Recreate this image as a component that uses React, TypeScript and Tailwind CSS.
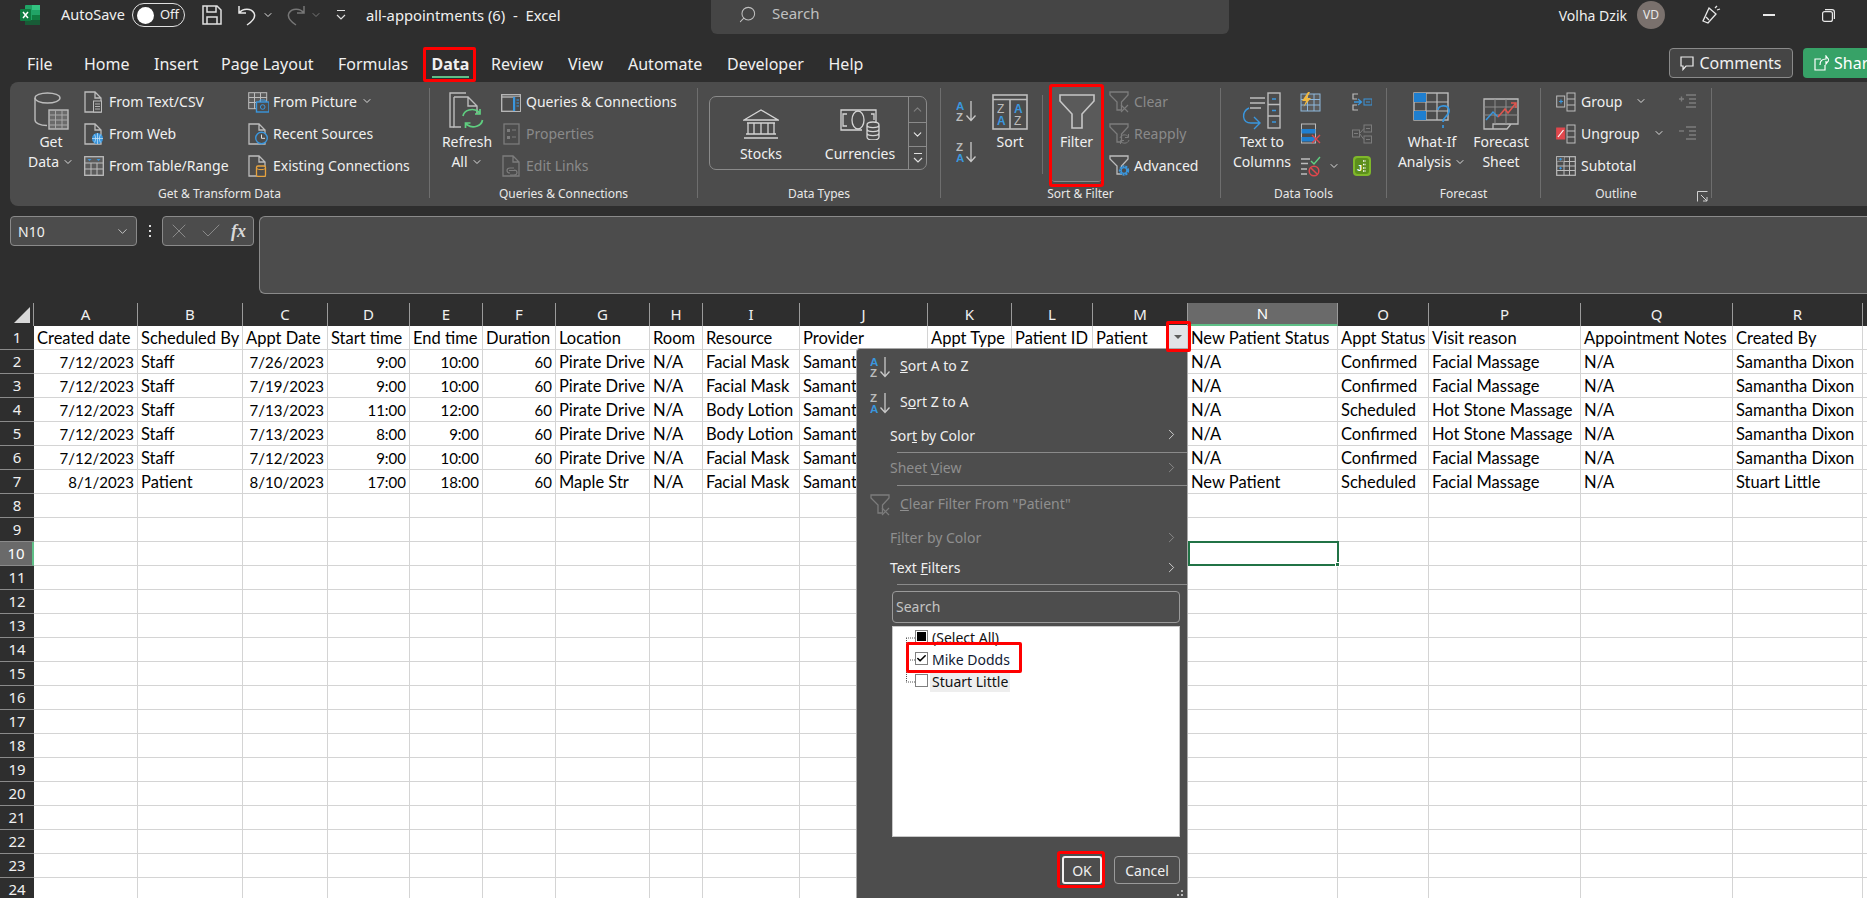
import React from "react";
import { ChevronDown, ChevronRight, ChevronUp, Search, X, Check } from "lucide-react";

const G = "#bcbcbc";
const D = "#7c7c7c";
const B = "#3a96dd";
const UI = "font-['Noto_Sans',sans-serif]";

function Page({ c = G, x = 0 }: { c?: string; x?: number }) {
  return <path d={`M${x + 1} 1H${x + 11}L${x + 17} 7V21H${x + 1}Z M${x + 11} 1V7H${x + 17}`} fill="none" stroke={c} strokeWidth="1.3" />;
}
const Ic = ({ w = 22, h = 22, children }: { w?: number; h?: number; children: React.ReactNode }) => (
  <svg width={w} height={h} viewBox={`0 0 ${w} ${h}`} fill="none">{children}</svg>
);

const ExcelLogo = () => (
  <svg width="20" height="20" viewBox="0 0 20 20">
    <rect x="5" y="0" width="15" height="20" rx="1" fill="#21a366" />
    <rect x="12" y="0" width="8" height="5" fill="#33c481" />
    <rect x="12" y="10" width="8" height="5" fill="#107c41" />
    <rect x="5" y="15" width="15" height="5" fill="#185c37" />
    <rect x="0" y="4" width="11" height="12" rx="1" fill="#107c41" />
    <path d="M3 7l5 6M8 7l-5 6" stroke="#fff" strokeWidth="1.5" />
  </svg>
);
const GetDataIc = () => (
  <svg width="35" height="38" viewBox="0 0 35 38" fill="none" stroke={G} strokeWidth="1.4">
    <ellipse cx="13.5" cy="6" rx="12.5" ry="5" />
    <path d="M1 6V28C1 31 6 33.5 13 33.5" />
    <rect x="15" y="18" width="19" height="19" fill="#6a6a6a" />
    <path d="M15 23H34M15 28H34M15 33H34M21.5 18V37M28 18V37" stroke="#a8a8a8" strokeWidth="1" />
  </svg>
);
const TextCsv = () => (
  <Ic w={20}><Page /><rect x="9.5" y="10" width="8" height="11" fill="#4c4c4c" stroke={G} /><path d="M11 13H16M11 15.5H16M11 18H16" stroke={G} strokeWidth=".9" /></Ic>
);
const WebIc = () => (
  <Ic w={20}><Page /><circle cx="13.5" cy="15.5" r="5.5" fill={B} /><path d="M8 15.5H19M13.5 10V21M10.5 11.5C12 14 12 17 10.5 19.5M16.5 11.5C15 14 15 17 16.5 19.5" stroke="#cfe6f8" strokeWidth=".7" /></Ic>
);
const TableIc = () => (
  <Ic w={20} h={20}><rect x=".7" y=".7" width="18.6" height="18.6" fill="#5c5c5c" stroke={G} strokeWidth="1.3" /><path d="M1 7H19M1 13H19M7 7V19M13 7V19" stroke={G} /><path d="M3.5 3H7.5L5.5 5ZM12.5 3H16.5L14.5 5Z" fill={B} /></Ic>
);
const PictureIc = () => (
  <Ic w={21} h={22}><rect x=".7" y="1.7" width="18" height="16" fill="#5c5c5c" stroke={G} /><path d="M1 6.5H19M1 11.5H19M6.5 2V18M12.5 2V18" stroke={G} /><rect x="8.5" y="11" width="12.5" height="10" fill="#4c4c4c" stroke={B} strokeWidth="1.4" /><path d="M11 11L12 9H17L18 11" stroke={B} /><circle cx="14.7" cy="16" r="2.3" stroke={B} /></Ic>
);
const RecentIc = () => (
  <Ic w={21}><Page /><circle cx="13.5" cy="15" r="5.8" fill="#4c4c4c" stroke={B} strokeWidth="1.4" /><path d="M13.5 11.5V15.3H17" stroke="#e0e0e0" /></Ic>
);
const ExistingIc = () => (
  <Ic w={21}><Page /><rect x="8.5" y="11" width="9" height="10.5" rx="1.5" fill="#4c4c4c" stroke="#e8a33d" strokeWidth="1.3" /><path d="M8.5 13.5C10 15 16 15 17.5 13.5" stroke="#e8a33d" /></Ic>
);
const RefreshIc = () => (
  <svg width="36" height="38" viewBox="0 0 36 38" fill="none" stroke={G} strokeWidth="1.4">
    <path d="M5 35H1V1H17" />
    <path d="M5 5H19L28 14V22M5 5V35H12M19 5V14H28" />
    <path d="M14 24C15 18 24 15.5 29 19.5L31 21.5M31 17V22H26M33.5 28C32.5 34 24 37 18.5 33L16.5 31M16.5 36V31H21.5" stroke="#5fcf80" strokeWidth="1.7" />
  </svg>
);
const QueriesIc = () => (
  <Ic w={20} h={20}><rect x=".7" y="2.7" width="18.6" height="16.6" stroke={G} strokeWidth="1.3" /><path d="M1 5H19" stroke={G} strokeWidth="1.3" /><rect x="12" y="5" width="7" height="14" fill="#4c4c4c" /><rect x="12" y="5" width="2.2" height="14" fill={B} /><path d="M15.5 8H18M15.5 11H18M15.5 14H18" stroke={B} /></Ic>
);
const PropsIc = () => (
  <Ic w={20}><rect x="3" y="1" width="15" height="20" stroke={D} strokeWidth="1.3" /><path d="M6 6H9V9H6ZM6 13H9V16H6Z" fill={D} /><path d="M11 7H15M11 14H15" stroke={D} /></Ic>
);
const LinksIc = () => (
  <Ic w={22}><Page c={D} x={1} /><path d="M9 18C5 18 5 13 9 13H13M13 15C17 15 17 20 13 20H9M8 15.5H14" stroke={D} strokeWidth="1.2" /></Ic>
);
const StocksIc = () => (
  <svg width="36" height="32" viewBox="0 0 36 32" fill="none" stroke="#d4d4d4" strokeWidth="1.3">
    <path d="M1 12L18 2L35 12Z" />
    <path d="M4 15H32M5 15V26M11 15V26M18 15V26M25 15V26M31 15V26M3 26H33M1 30H35" />
  </svg>
);
const CurrIc = () => (
  <svg width="40" height="32" viewBox="0 0 40 32" fill="none" stroke="#d4d4d4" strokeWidth="1.3">
    <path d="M22 22H1V2H36V14" />
    <path d="M7 6H3V18H7M31 6H34V12" />
    <ellipse cx="18" cy="12" rx="6" ry="9" />
    <path d="M27 17C27 13 39 13 39 17V29C39 33 27 33 27 29Z M27 17C27 20.5 39 20.5 39 17M27 21C27 24.5 39 24.5 39 21M27 25C27 28.5 39 28.5 39 25" fill="#4c4c4c" />
  </svg>
);
const Letters = ({ a, b, ca, cb }: { a: string; b: string; ca: string; cb: string }) => (
  <svg width="21" height="22" viewBox="0 0 21 22">
    <text x="0" y="9.5" fontFamily="Liberation Sans" fontWeight="700" fontSize="11.5" fill={ca}>{a}</text>
    <text x="0" y="21" fontFamily="Liberation Sans" fontWeight="700" fontSize="11.5" fill={cb}>{b}</text>
    <path d="M15 1V20M10.5 15.5L15 20.5L19.5 15.5" stroke="#c8c8c8" strokeWidth="1.3" fill="none" />
  </svg>
);
const SortIc = () => (
  <svg width="36" height="36" viewBox="0 0 36 36" fill="none">
    <rect x="1" y="1" width="34" height="34" stroke={G} strokeWidth="1.6" />
    <path d="M1 5.5H35M18 5.5V35" stroke={G} strokeWidth="1.6" />
    <text x="5" y="19" fontFamily="Liberation Sans" fontSize="12" fill={G}>Z</text>
    <text x="5" y="31" fontFamily="Liberation Sans" fontSize="12" fontWeight="700" fill={B}>A</text>
    <text x="22" y="19" fontFamily="Liberation Sans" fontSize="12" fontWeight="700" fill={B}>A</text>
    <text x="22" y="31" fontFamily="Liberation Sans" fontSize="12" fill={G}>Z</text>
  </svg>
);
const BigFunnel = () => (
  <svg width="36" height="36" viewBox="0 0 36 36" fill="none"><path d="M1 1H35V7L23 20V34H13V20L1 7Z" stroke="#c6c6c6" strokeWidth="1.6" /></svg>
);
const funnel = (c: string) => <path d="M1 1H19V4L12.5 11V19H8V11L1 4Z" stroke={c} strokeWidth="1.3" fill="#4c4c4c" />;
const ClearIc = () => <Ic w={21}>{funnel(D)}<path d="M12 14L19 21M19 14L12 21" stroke={D} strokeWidth="1.2" /></Ic>;
const ReapplyIc = () => <Ic w={21}>{funnel(D)}<path d="M11 15C12 11 18 11 19.5 14M19.5 11V14.5H16M20 17C19 21 13 21 11.5 18M11.5 21V17.5H15" stroke={D} /></Ic>;
const AdvIc = () => <Ic w={21}>{funnel(G)}<circle cx="15" cy="15.5" r="4" stroke={B} strokeWidth="2.4" strokeDasharray="2 .8" fill="#4c4c4c" /><circle cx="15" cy="15.5" r="2.8" stroke={B} strokeWidth="1.2" /></Ic>;
const T2CIc = () => (
  <svg width="40" height="38" viewBox="0 0 40 38" fill="none">
    <path d="M8 6H23M8 11H23M8 16H19" stroke={G} strokeWidth="1.4" />
    <rect x="26" y="1" width="12" height="35" stroke={G} strokeWidth="1.4" />
    <path d="M26 12.5H38M26 24H38" stroke={G} strokeWidth="1.4" />
    <path d="M30 7H34M30 18.5H34M30 30H34" stroke={B} strokeWidth="1.3" />
    <path d="M7 16C-1 20 0 31 9 31H17M12 25L18 31L12 37" stroke={B} strokeWidth="1.4" />
  </svg>
);
const FlashIc = () => (
  <Ic w={21} h={20}><rect x="1" y="2" width="19" height="17" fill="#5c5c5c" stroke="#8db8dc" /><path d="M1 7.5H20M1 13H20M7.5 2V19M14 2V19" stroke="#8db8dc" /><path d="M8 0L2 9H6L3.5 15L11 6H7L10 0Z" fill="#f0b840" /></Ic>
);
const DupIc = () => (
  <Ic w={21} h={22}><rect x="1.5" y="1" width="14" height="19" stroke={G} /><rect x="1.5" y="6" width="14" height="4.5" fill="#1f7fd0" /><rect x="1.5" y="14" width="14" height="4.5" fill="#1f7fd0" /><path d="M12 12L20 20M20 12L12 20" stroke="#e0474c" strokeWidth="1.4" /></Ic>
);
const ValidIc = () => (
  <Ic w={21} h={22}><path d="M1 4H10M1 8.5H8M1 14H7M1 19H7" stroke={G} strokeWidth="1.3" /><path d="M11 6L14 9L20 2" stroke="#5fcf80" strokeWidth="1.4" /><circle cx="14" cy="16" r="4.8" stroke="#e0474c" strokeWidth="1.5" /><path d="M10.7 12.7L17.3 19.3" stroke="#e0474c" strokeWidth="1.5" /></Ic>
);
const ConsIc = () => (
  <Ic w={20} h={18}><path d="M6 1H1V6H5M6 17H1V12H5" stroke={G} strokeWidth="1.2" /><path d="M2 9H9M6 6L9.5 9L6 12" stroke={B} strokeWidth="1.3" /><rect x="12" y="6" width="8" height="6" stroke={B} /><path d="M14 9H18" stroke={B} /></Ic>
);
const RelIc = () => (
  <Ic w={20} h={20}><rect x="0.5" y="6" width="7" height="7" stroke={D} /><rect x="12" y="1" width="7.5" height="7" stroke={D} /><rect x="12" y="12" width="7.5" height="7" stroke={D} /><path d="M7.5 9.5L12 4.5M7.5 9.5L12 15.5M2 9.5H6M14 4.5H18M14 15.5H18" stroke={D} /></Ic>
);
const ModelIc = () => (
  <Ic w={20} h={22}><rect x="1" y="1" width="18" height="20" rx="4" fill="#7fb82a" /><rect x="3" y="3" width="14" height="16" rx="3" fill="#5c8f1c" /><text x="5" y="16" fontFamily="Liberation Sans" fontSize="9" fontWeight="700" fill="#fff">J</text><path d="M11 6H14M11 9.5H14M11 13H14M11 16H14" stroke="#fff" strokeWidth="1.3" strokeDasharray="1.5 1" /></Ic>
);
const WhatIfIc = () => (
  <svg width="39" height="38" viewBox="0 0 39 38" fill="none">
    <rect x="1" y="1" width="34" height="27" stroke={G} strokeWidth="1.4" />
    <path d="M1 10H35M1 19H35M13 1V28M24 1V28" stroke={G} strokeWidth="1.2" />
    <rect x="1" y="1" width="12" height="9" fill="#1f7fd0" />
    <rect x="1" y="19" width="12" height="9" fill="#1f7fd0" />
    <path d="M25 18C25 13 35 12 36 18C37 24 30 24 30 30M30 33V36" stroke={B} strokeWidth="1.7" />
  </svg>
);
const ForecastIc = () => (
  <svg width="36" height="32" viewBox="0 0 36 32" fill="none">
    <path d="M10 31H1V1H35V26H28L24 31H10V26H28" stroke={G} strokeWidth="1.3" />
    <path d="M1 9H35M1 17H35M12 1V26M23 1V26" stroke="#8c8c8c" />
    <path d="M3 22L10 14L15 19" stroke={B} strokeWidth="1.5" />
    <path d="M15 19L22 11L25 15L33 5M28 5H33V10" stroke="#e0564f" strokeWidth="1.5" />
  </svg>
);
const GroupIc = ({ red }: { red?: boolean }) => (
  <Ic w={20} h={20}><rect x=".7" y="4" width="8" height="11" fill={red ? "#e0474c" : "#4c4c4c"} stroke={red ? "#e0474c" : G} /><path d={red ? "M2 13L7.5 6" : "M3 9.5H7M5 7.5V11.5"} stroke={red ? "#fff" : B} strokeWidth="1.2" /><rect x="11" y="1" width="8" height="18" stroke={G} /><path d="M11 7H19M11 13H19" stroke={G} /></Ic>
);
const SubtotalIc = () => (
  <Ic w={20} h={20}><rect x=".7" y=".7" width="18.6" height="18.6" stroke={G} strokeWidth="1.2" /><path d="M8 1V19M13.5 1V19M1 5.5H19M1 10H19M1 14.5H19" stroke={G} /><rect x="1" y="1" width="7" height="4.5" fill="#5c5c5c" /><path d="M3 3.2H6M4.5 2V4.5M3 12.2H6M4.5 11V13.5" stroke={B} /></Ic>
);
const DetailIc = ({ plus }: { plus?: boolean }) => (
  <Ic w={19} h={16}><path d={plus ? "M1 5H6M3.5 2.5V7.5" : "M1 5H6"} stroke={D} strokeWidth="1.4" /><path d="M8 1H18M11 5H18M11 9H18M8 13H18" stroke={D} strokeWidth="1.4" /></Ic>
);
const Launcher = () => (
  <svg width="11" height="11" viewBox="0 0 11 11" fill="none" stroke="#d0d0d0"><path d="M.5 10.5V.5H10.5" /><path d="M4 4L10 10M6 10H10V6" /></svg>
);

const Chev = ({ c = "#dcdcdc" }: { c?: string }) => <ChevronDown size={12} color={c} strokeWidth={2} className="shrink-0" />;

function Small({ icon, label, dim, className = "" }: { icon?: React.ReactNode; label?: React.ReactNode; dim?: boolean; className?: string }) {
  return (
    <div className={`flex h-8 items-center text-[14px] whitespace-nowrap ${dim ? "text-[#8a8a8a]" : "text-[#f0f0f0]"} ${className}`}>
      <span className="flex w-[25px] shrink-0 items-center">{icon}</span>
      <span className="pb-[2px]">{label}</span>
    </div>
  );
}
function Big({ icon, l1, l2, className = "" }: { icon: React.ReactNode; l1: string; l2?: React.ReactNode; className?: string }) {
  return (
    <div className={`flex shrink-0 flex-col items-center text-[14px] leading-[20px] text-[#f0f0f0] whitespace-nowrap ${className}`}>
      <div className="flex h-[46px] items-end pb-[2px]">{icon}</div>
      <div>{l1}</div>
      {l2 && <div className="flex items-center gap-[3px]">{l2}</div>}
    </div>
  );
}
function Group({ label, width, children, extra }: { label: string; width: string; children: React.ReactNode; extra?: React.ReactNode }) {
  return (
    <div className={`flex shrink-0 ${width}`}>
      <div className="relative flex min-w-0 flex-1 flex-col">
        <div className="flex h-[98px]">{children}</div>
        <div className={`flex h-[20px] items-center justify-center text-[12px] text-[#e8e8e8] ${extra ? "pr-[20px]" : ""}`}>{label}</div>
        {extra && <div className="absolute right-[3px] bottom-[4px]">{extra}</div>}
      </div>
      <div className="mt-[2px] h-[110px] w-px bg-[#6e6e6e]" />
    </div>
  );
}

const COLS = "grid-cols-[34px_104px_105px_85px_82px_73px_73px_94px_53px_97px_128px_84px_81px_95px_150px_91px_152px_152px_130px_4px]";
const letters = "A B C D E F G H I J K L M N O P Q R".split(" ");
const rightAlign = [0, 2, 3, 4, 5];
const rows: string[][] = [
  ["Created date", "Scheduled By", "Appt Date", "Start time", "End time", "Duration", "Location", "Room", "Resource", "Provider", "Appt Type", "Patient ID", "Patient", "New Patient Status", "Appt Status", "Visit reason", "Appointment Notes", "Created By"],
  ["7/12/2023", "Staff", "7/26/2023", "9:00", "10:00", "60", "Pirate Drive", "N/A", "Facial Mask", "Samantha Dixon", "", "", "", "N/A", "Confirmed", "Facial Massage", "N/A", "Samantha Dixon"],
  ["7/12/2023", "Staff", "7/19/2023", "9:00", "10:00", "60", "Pirate Drive", "N/A", "Facial Mask", "Samantha Dixon", "", "", "", "N/A", "Confirmed", "Facial Massage", "N/A", "Samantha Dixon"],
  ["7/12/2023", "Staff", "7/13/2023", "11:00", "12:00", "60", "Pirate Drive", "N/A", "Body Lotion", "Samantha Dixon", "", "", "", "N/A", "Scheduled", "Hot Stone Massage", "N/A", "Samantha Dixon"],
  ["7/12/2023", "Staff", "7/13/2023", "8:00", "9:00", "60", "Pirate Drive", "N/A", "Body Lotion", "Samantha Dixon", "", "", "", "N/A", "Confirmed", "Hot Stone Massage", "N/A", "Samantha Dixon"],
  ["7/12/2023", "Staff", "7/12/2023", "9:00", "10:00", "60", "Pirate Drive", "N/A", "Facial Mask", "Samantha Dixon", "", "", "", "N/A", "Confirmed", "Facial Massage", "N/A", "Samantha Dixon"],
  ["8/1/2023", "Patient", "8/10/2023", "17:00", "18:00", "60", "Maple Str", "N/A", "Facial Mask", "Samantha Dixon", "", "", "", "New Patient", "Scheduled", "Facial Massage", "N/A", "Stuart Little"],
];

function Sheet() {
  const all = Array.from({ length: 24 }, (_, i) => i);
  return (
    <div className="min-h-0 flex-1 overflow-hidden">
      <div className={`grid h-[23px] ${COLS} ${UI}`}>
        <div className="relative border-r border-[#9a9a9a]">
          <div className="absolute right-[3px] bottom-[3px] h-0 w-0 border-b-[16px] border-l-[16px] border-b-[#d8d8d8] border-l-transparent" />
        </div>
        {letters.map((l) => (
          <div key={l} className={`flex items-center justify-center border-r border-[#9a9a9a] text-[15px] leading-none ${l === "N" ? "border-b-2 border-b-[#5fbf87] bg-[#6a6a6a] text-white" : "text-[#f0f0f0]"}`}>{l}</div>
        ))}
        <div />
      </div>
      {all.map((r) => (
        <div key={r} className={`grid h-6 ${COLS}`}>
          <div className={`flex items-center justify-center border-b border-[#8a8a8a] text-[15px] leading-none ${UI} ${r === 9 ? "border-r-2 border-r-[#5fbf87] bg-[#6a6a6a] text-white" : "text-[#f0f0f0]"}`}>{r + 1}</div>
          {letters.map((l, c) => {
            const t = rows[r]?.[c] ?? "";
            const right = r > 0 && rightAlign.includes(c);
            return (
              <div key={l} className={`flex items-center overflow-hidden border-r border-b border-[#d4d4d4] bg-white px-[3px] pt-[1px] font-['Lato',sans-serif] leading-none whitespace-nowrap text-black ${right ? "justify-end text-[15px]" : "text-[16.5px]"}`}>{t}</div>
            );
          })}
          <div className="border-b border-[#d4d4d4] bg-white" />
        </div>
      ))}
    </div>
  );
}

function MenuRow({ h, icon, dim, label, chev, pl }: { h: string; icon?: React.ReactNode; dim?: boolean; label: React.ReactNode; chev?: boolean; pl: string }) {
  return (
    <div className={`flex shrink-0 items-center ${h} ${pl} ${dim ? "text-[#8f8f8f]" : "text-[#f0f0f0]"}`}>
      {icon && <span className="flex w-[30px] shrink-0 items-center">{icon}</span>}
      <span className="flex-1 pb-[3px]">{label}</span>
      {chev && <ChevronRight size={17} strokeWidth={1.3} className="mr-[7px] mb-[4px] shrink-0" color={dim ? "#8f8f8f" : "#d8d8d8"} />}
    </div>
  );
}
const Sep = () => <div className="ml-[40px] h-px shrink-0 bg-[#8a8a8a]" />;
const Box = ({ children }: { children?: React.ReactNode }) => (
  <span className="mb-[3px] flex h-[13px] w-[13px] shrink-0 items-center justify-center border border-[#808080] bg-white">{children}</span>
);

function FilterPopup() {
  return (
    <div className={`absolute top-[348px] left-[856px] flex h-[550px] w-[332px] flex-col rounded-tl-[4px] border-x border-t border-[#a8a8a8] bg-[#4d4d4d] text-[14px] ${UI}`}>
      <MenuRow h="h-[36px]" pl="pl-[13px]" icon={<Letters a="A" b="Z" ca={B} cb={G} />} label={<><u>S</u>ort A to Z</>} />
      <MenuRow h="h-[36px]" pl="pl-[13px]" icon={<Letters a="Z" b="A" ca={G} cb={B} />} label={<>S<u>o</u>rt Z to A</>} />
      <MenuRow h="h-[31px]" pl="pl-[33px]" chev label={<>Sor<u>t</u> by Color</>} />
      <Sep />
      <MenuRow h="h-[32px]" pl="pl-[33px]" dim chev label={<>Sheet <u>V</u>iew</>} />
      <Sep />
      <MenuRow h="h-[38px]" pl="pl-[13px]" dim icon={<ClearIc />} label={<><u>C</u>lear Filter From "Patient"</>} />
      <MenuRow h="h-[30px]" pl="pl-[33px]" dim chev label={<>F<u>i</u>lter by Color</>} />
      <MenuRow h="h-[30px]" pl="pl-[33px]" chev label={<>Text <u>F</u>ilters</>} />
      <Sep />
      <div className="mt-[6px] ml-[35px] flex h-[32px] w-[288px] shrink-0 items-center rounded-[4px] border border-[#9a9a9a] pb-[2px] pl-[3px] text-[#c4c4c4]">Search</div>
      <div className="relative mt-[3px] ml-[35px] flex h-[211px] w-[288px] shrink-0 flex-col border border-[#c8c8c8] bg-white pl-[22px] text-[14px] leading-[20px] text-[#111]">
        <svg className="absolute top-[6px] left-[13px]" width="10" height="50" fill="none" stroke="#555" strokeDasharray="1 1"><path d="M0 5H10M.5 5V49M0 27H10M0 49H10" /></svg>
        <div className="flex h-[22px] items-center gap-[4px]"><Box><span className="h-[9px] w-[9px] bg-black" /></Box><span className="pb-[1px]">(Select All)</span></div>
        <div className="flex h-[22px] items-center gap-[4px]"><Box><Check size={11} strokeWidth={3.5} color="#000" /></Box><span className="pb-[1px] text-[#111a33]">Mike Dodds</span></div>
        <div className="flex h-[22px] items-center gap-[2px]"><Box /><span className="bg-[#eeeeee] px-[2px]">Stuart Little</span></div>
      </div>
      <div className="mt-[19px] ml-[205px] flex shrink-0 gap-[12px]">
        <div className="flex h-[28px] w-[40px] items-center justify-center rounded-[3px] border-2 border-[#f2f2f2] text-[#f0f0f0]">OK</div>
        <div className="flex h-[28px] w-[66px] items-center justify-center rounded-[4px] border border-[#9a9a9a] text-[#f0f0f0]">Cancel</div>
      </div>
      <svg className="absolute right-[2px] bottom-0" width="10" height="10" fill="#bbb"><rect x="6" y="2" width="2" height="2" /><rect x="2" y="6" width="2" height="2" /><rect x="6" y="6" width="2" height="2" /></svg>
    </div>
  );
}

const tabs = [
  ["File", "w-[57px]"], ["Home", "w-[70px]"], ["Insert", "w-[67px]"], ["Page Layout", "w-[117px]"], ["Formulas", "w-[93.5px]"],
];
const tabs2 = [["Review", "w-[77px]"], ["View", "w-[60px]"], ["Automate", "w-[99px]"], ["Developer", "w-[101.5px]"], ["Help", "w-[50px]"]];

export default function App() {
  return (
    <div className={`relative flex h-[898px] w-[1867px] flex-col overflow-hidden bg-[#2e2e2e] text-[#f0f0f0] ${UI}`}>
      {/* title bar */}
      <div className="flex h-[47px] shrink-0 items-start text-[14px]">
        <div className="flex h-[30px] w-[711px] shrink-0 items-center">
          <div className="ml-[20px]"><ExcelLogo /></div>
          <span className="ml-[21px] text-[14.5px]">AutoSave</span>
          <div className="ml-[7px] flex h-[24px] w-[53px] items-center rounded-full border border-[#e0e0e0] pl-[4px]">
            <span className="h-[17px] w-[17px] rounded-full bg-white" />
            <span className="ml-[6px] text-[13px]">Off</span>
          </div>
          <svg className="ml-[17px]" width="20" height="20" viewBox="0 0 20 20" fill="none" stroke="#e0e0e0" strokeWidth="1.5"><path d="M1 1H15L19 5V19H1Z M5 1V7H14V1M5 19V12H15V19" /></svg>
          <svg className="ml-[16px]" width="19" height="21" viewBox="0 0 19 21" fill="none" stroke="#e8e8e8" strokeWidth="1.5"><path d="M1 1V8H8M1 8C5 3 13 3 16 8C18 12 15 16 9 20" /></svg>
          <ChevronDown size={12} className="ml-[5px]" color="#e0e0e0" />
          <svg className="ml-[12px]" width="19" height="21" viewBox="0 0 19 21" fill="none" stroke="#777" strokeWidth="1.5"><path d="M18 1V8H11M18 8C14 3 6 3 3 8C1 12 4 16 10 20" /></svg>
          <ChevronDown size={12} className="ml-[5px]" color="#777" />
          <svg className="ml-[13px]" width="12" height="12" viewBox="0 0 12 12" fill="none" stroke="#e0e0e0" strokeWidth="1.2"><path d="M2 1.5H10M2 6L6 10L10 6" /></svg>
          <span className="ml-[19px] text-[14.8px] whitespace-pre">all-appointments (6)  -  Excel</span>
        </div>
        <div className="flex h-[34px] w-[518px] shrink-0 items-center rounded-b-[6px] bg-[#454545] pb-[5px] pl-[27px] text-[#c0c0c0]">
          <Search size={19} strokeWidth={1.3} className="-scale-x-100" />
          <span className="ml-[15px] pb-[2px] text-[15px]">Search</span>
        </div>
        <div className="flex h-[30px] flex-1 items-center justify-end">
          <span className="mr-[10px]">Volha Dzik</span>
          <span className="flex h-[28px] w-[28px] items-center justify-center rounded-full bg-[#7a716d] text-[12px] text-[#e8e8e8]">VD</span>
          <svg className="ml-[36px]" width="20" height="20" viewBox="0 0 20 20" fill="none" stroke="#e8e8e8" strokeWidth="1.3"><path d="M8 3L15 9L7 18L2 16Z M5 12L8 15 M14 3L16 1M16 5L19 4" /></svg>
          <span className="ml-[42px] h-[2px] w-[12px] bg-[#e8e8e8]" />
          <svg className="mr-[32px] ml-[47px]" width="13" height="13" viewBox="0 0 13 13" fill="none" stroke="#e8e8e8" strokeWidth="1.2"><rect x=".6" y="2.6" width="9.8" height="9.8" rx="2" /><path d="M3 .6H10C11.5.6 12.4 1.5 12.4 3V10" /></svg>
        </div>
      </div>
      {/* tabs */}
      <div className="flex h-[35px] shrink-0 items-start pt-[5px] pl-[27px] text-[16px]">
        {tabs.map(([t, w]) => <span key={t} className={`${w} shrink-0`}>{t}</span>)}
        <div className="flex w-[59.5px] shrink-0 flex-col items-start">
          <span className="font-bold">Data</span>
          <span className="h-[2px] w-[37px] bg-[#5fbf87]" />
        </div>
        {tabs2.map(([t, w]) => <span key={t} className={`${w} shrink-0`}>{t}</span>)}
        <div className="-mt-[4px] ml-auto flex shrink-0 items-center gap-[10px]">
          <div className="flex h-[30px] w-[124px] items-center justify-center gap-[5px] rounded-[4px] border border-[#8a8a8a] bg-[#454545] text-[16px]">
            <svg width="14" height="15" viewBox="0 0 14 15" fill="none" stroke="#eee" strokeWidth="1.2"><path d="M1 1H13V10H6L3 13.5V10H1Z" /></svg>
            Comments
          </div>
          <div className="flex h-[30px] w-[64px] items-center gap-[5px] overflow-hidden rounded-l-[4px] bg-[#37a267] pl-[11px] text-[16px] text-white">
            <svg className="shrink-0" width="15" height="16" viewBox="0 0 15 16" fill="none" stroke="#fff" strokeWidth="1.2"><path d="M7 4H1V15H11V10M6 10C6 6 8 4 12 4V1L15 5L12 9V6" /></svg>
            Share
          </div>
        </div>
      </div>
      {/* ribbon */}
      <div className="ml-[10px] flex h-[124px] shrink-0 rounded-l-[8px] bg-[#4c4c4c] pt-[4px]">
        <Group label="Get & Transform Data" width="w-[420px]">
          <Big className="ml-[14px] w-[54px]" icon={<GetDataIc />} l1="Get" l2={<>Data <Chev /></>} />
          <div className="ml-[6px] w-[164px]">
            <Small icon={<TextCsv />} label="From Text/CSV" />
            <Small icon={<WebIc />} label="From Web" />
            <Small icon={<TableIc />} label="From Table/Range" />
          </div>
          <div>
            <Small icon={<PictureIc />} label={<span className="flex items-center gap-[4px]">From Picture <Chev /></span>} />
            <Small icon={<RecentIc />} label="Recent Sources" />
            <Small icon={<ExistingIc />} label="Existing Connections" />
          </div>
        </Group>
        <Group label="Queries & Connections" width="w-[268px]">
          <Big className="ml-[10px] w-[54px]" icon={<RefreshIc />} l1="Refresh" l2={<>All <Chev /></>} />
          <div className="ml-[7px]">
            <Small icon={<QueriesIc />} label="Queries & Connections" />
            <Small icon={<PropsIc />} label="Properties" dim />
            <Small icon={<LinksIc />} label="Edit Links" dim />
          </div>
        </Group>
        <Group label="Data Types" width="w-[243px]">
          <div className="mt-[10px] ml-[11px] flex h-[74px] w-[218px] rounded-[7px] border border-[#8a8a8a] text-[14px]">
            <div className="flex w-[102px] flex-col items-center pt-[11px]"><StocksIc /><span className="mt-[3px]">Stocks</span></div>
            <div className="flex w-[96px] flex-col items-center pt-[11px]"><CurrIc /><span className="mt-[3px]">Currencies</span></div>
            <div className="flex flex-1 flex-col border-l border-[#8a8a8a]">
              <div className="flex h-[26px] items-center justify-center border-b border-[#8a8a8a]"><ChevronUp size={13} color="#808080" /></div>
              <div className="flex h-[24px] items-center justify-center border-b border-[#8a8a8a]"><ChevronDown size={13} color="#e8e8e8" /></div>
              <div className="flex flex-1 items-center justify-center"><svg width="12" height="12" viewBox="0 0 12 12" fill="none" stroke="#e0e0e0" strokeWidth="1.2"><path d="M2 1.5H10M2 6L6 10L10 6" /></svg></div>
            </div>
          </div>
        </Group>
        <Group label="Sort & Filter" width="w-[280px]">
          <div className="ml-[15px] flex w-[36px] shrink-0 flex-col gap-[19px] pt-[14px]">
            <Letters a="A" b="Z" ca={B} cb={G} />
            <Letters a="Z" b="A" ca={G} cb={B} />
          </div>
          <Big className="w-[36px]" icon={<SortIc />} l1="Sort" />
          <div className="mt-[9px] ml-[14px] h-[79px] w-px bg-[#6e6e6e]" />
          <div className="ml-[9px] h-[96px] w-[49px] shrink-0 rounded-[3px] border-b border-[#8a8a8a] bg-[#5a5a5a]">
            <Big className="w-full" icon={<BigFunnel />} l1="Filter" />
          </div>
          <div className="ml-[8px]">
            <Small icon={<ClearIc />} label="Clear" dim />
            <Small icon={<ReapplyIc />} label="Reapply" dim />
            <Small icon={<AdvIc />} label="Advanced" />
          </div>
        </Group>
        <Group label="Data Tools" width="w-[166px]">
          <Big className="ml-[11px] w-[60px]" icon={<T2CIc />} l1="Text to" l2="Columns" />
          <div className="ml-[8px] w-[52px]">
            <div className="flex h-8 items-center"><FlashIc /></div>
            <div className="flex h-8 items-center"><DupIc /></div>
            <div className="flex h-8 items-center gap-[7px]"><ValidIc /><Chev /></div>
          </div>
          <div>
            <div className="flex h-8 items-center"><ConsIc /></div>
            <div className="flex h-8 items-center"><RelIc /></div>
            <div className="flex h-8 items-center"><ModelIc /></div>
          </div>
        </Group>
        <Group label="Forecast" width="w-[154px]">
          <Big className="ml-[7px] w-[76px]" icon={<WhatIfIc />} l1="What-If" l2={<>Analysis <Chev /></>} />
          <Big className="w-[62px]" icon={<ForecastIc />} l1="Forecast" l2="Sheet" />
        </Group>
        <Group label="Outline" width="w-[171px]" extra={<Launcher />}>
          <div className="ml-[15px] w-[122px] shrink-0">
            <Small icon={<GroupIc />} label={<span className="flex items-center gap-[13px]">Group <Chev /></span>} />
            <Small icon={<GroupIc red />} label={<span className="flex items-center gap-[13px]">Ungroup <Chev /></span>} />
            <Small icon={<SubtotalIc />} label="Subtotal" />
          </div>
          <div>
            <div className="flex h-8 items-center"><DetailIc plus /></div>
            <div className="flex h-8 items-center"><DetailIc /></div>
          </div>
        </Group>
      </div>
      {/* formula bar */}
      <div className="mt-[10px] flex h-[78px] shrink-0 items-start">
        <div className="ml-[10px] flex h-[30px] w-[127px] items-center justify-between rounded-[4px] border border-[#8a8a8a] bg-[#4c4c4c] pr-[6px] pl-[7px] text-[14px]">
          N10 <ChevronDown size={15} strokeWidth={1.3} color="#dcdcdc" />
        </div>
        <div className="flex h-[30px] w-[25px] flex-col items-center justify-center gap-[3px]">
          <span className="h-[2px] w-[2px] bg-[#dcdcdc]" /><span className="h-[2px] w-[2px] bg-[#dcdcdc]" /><span className="h-[2px] w-[2px] bg-[#dcdcdc]" />
        </div>
        <div className="flex h-[30px] w-[92px] items-center justify-between rounded-[4px] border border-[#8a8a8a] bg-[#4c4c4c] px-[4px]">
          <X size={24} strokeWidth={1} color="#8a8a8a" />
          <Check size={24} strokeWidth={1} color="#8a8a8a" />
          <span className="pr-[3px] font-['Liberation_Serif',serif] text-[18px] font-bold text-[#d8d8d8] italic">fx</span>
        </div>
        <div className="ml-[5px] h-[78px] flex-1 rounded-l-[6px] border border-r-0 border-[#8a8a8a] bg-[#4c4c4c]" />
      </div>
      <div className="h-[9px] shrink-0" />
      <Sheet />
      {/* filter header button */}
      <div className="absolute top-[325px] left-[1168px] flex h-[23px] w-[19px] items-center justify-center bg-[#e1e4e8]">
        <span className="h-0 w-0 border-x-[4px] border-t-[4px] border-x-transparent border-t-[#5c5c5c]" />
      </div>
      {/* selected cell */}
      <div className="absolute top-[541px] left-[1188px] h-[25px] w-[151px] border-2 border-[#217346]">
        <span className="absolute -right-[3px] -bottom-[3px] h-[5px] w-[5px] border border-white bg-[#217346]" />
      </div>
      <FilterPopup />
      {/* annotation boxes */}
      <div className="absolute top-[47px] left-[423px] h-[35px] w-[53px] rounded-[2px] border-[3px] border-[#ff0000]" />
      <div className="absolute top-[84px] left-[1049px] h-[103px] w-[55px] rounded-[3px] border-[3px] border-[#ff0000]" />
      <div className="absolute top-[321px] left-[1166px] h-[31px] w-[25px] rounded-[2px] border-[3px] border-[#ff0000]" />
      <div className="absolute top-[642px] left-[906px] h-[31px] w-[116px] rounded-[2px] border-[3px] border-[#ff0000]" />
      <div className="absolute top-[851px] left-[1057px] h-[37px] w-[48px] rounded-[3px] border-[3px] border-[#ff0000]" />
    </div>
  );
}
